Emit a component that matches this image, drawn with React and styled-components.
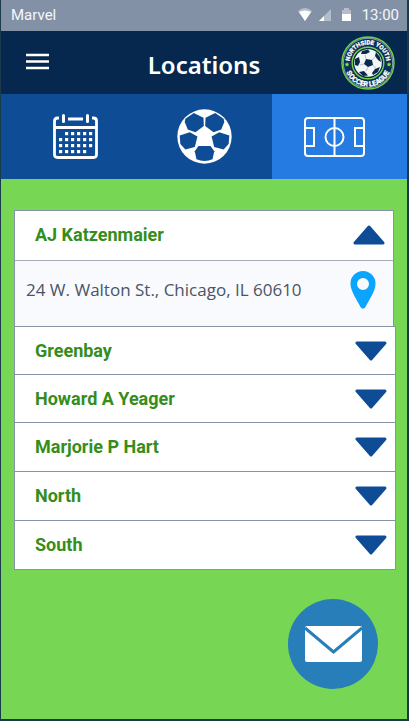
import React, { useState } from 'react';
import styled, { createGlobalStyle } from 'styled-components';

const GlobalStyle = createGlobalStyle`
  *, *::before, *::after { box-sizing: border-box; }
  body { margin: 0; background: #142f47; }
  button, a { font: inherit; color: inherit; }
`;

const Screen = styled.div`
  display: flex;
  flex-direction: column;
  min-height: 100vh;
  border: solid #1b3a4b;
  border-width: 0 2px 2px 1px;
  background: #77d653;
  font-family: Roboto, sans-serif;
`;

const StatusBar = styled.div`
  display: flex;
  align-items: center;
  height: 31px;
  padding: 0 8px 2px 10px;
  background: #8391a7;
  color: #f4f7fb;
  font-size: 15px;
  line-height: 18px;
`;

const StatusIcons = styled.div`
  display: flex;
  align-items: center;
  gap: 7px;
  margin-left: auto;
  margin-right: 7px;
`;

const Header = styled.header`
  display: grid;
  grid-template-columns: 72px 1fr 72px;
  align-items: center;
  height: 63px;
  background: #06284e;
  color: #fff;
`;

const MenuButton = styled.button`
  display: flex;
  justify-self: center;
  padding: 0 0 2px;
  border: 0;
  background: none;
  cursor: pointer;
`;

const Title = styled.h1`
  margin: 0;
  padding-top: 4px;
  font: 600 24px/32px "Noto Sans", sans-serif;
  text-align: center;
`;

const Crest = styled.svg`
  display: block;
  width: 54px;
  height: 54px;
  justify-self: end;
  margin-right: 12px;
`;

const Tabs = styled.nav`
  display: grid;
  grid-template-columns: repeat(3, 1fr);
  height: 85px;
`;

const Tab = styled.button`
  display: flex;
  align-items: center;
  justify-content: center;
  padding: 0;
  border: 0;
  background: ${({ $active }) => ($active ? '#257be2' : '#0e4c95')};
  cursor: pointer;
  &:first-child { padding-left: 14px; }
  &:nth-child(2) { padding-left: 2px; }
  &:last-child { padding-right: 10px; }
`;

const Content = styled.main`
  display: flex;
  flex: 1;
  flex-direction: column;
  padding: 31px 11px 30px 13px;
`;

const ItemHeading = styled.h2`
  margin: 0;
  font: 700 18px/24px Roboto, sans-serif;
`;

const ItemButton = styled.button`
  display: flex;
  align-items: center;
  justify-content: space-between;
  width: 100%;
  height: ${({ $open }) => ($open ? 49 : 48)}px;
  padding: 0 8px ${({ $open }) => ($open ? 2 : 0)}px 20px;
  border: 0;
  background: none;
  color: #358d1c;
  text-align: left;
  cursor: pointer;
`;

const Item = styled.section`
  margin-right: ${({ $open }) => ($open ? 2 : 0)}px;
  border: solid #8793a8;
  border-width: 1px 1px 0 1px;
  background: #fff;
  &:last-child { border-bottom-width: 1px; }
  &:nth-child(2) ${ItemButton}, &:nth-child(3) ${ItemButton} { height: 47px; }
`;

const Address = styled.div`
  display: flex;
  align-items: center;
  justify-content: space-between;
  height: 66px;
  padding: 0 17px 7px 11px;
  border-top: 1px solid #a3aab8;
  background: #f8fafd;
  color: #4b5465;
  font: 400 17px/24px "Open Sans", sans-serif;
`;

const MapLink = styled.a`
  display: flex;
`;

const MailButton = styled.button`
  display: flex;
  align-items: center;
  justify-content: center;
  align-self: flex-end;
  width: 90px;
  height: 90px;
  margin: auto 18px 0 0;
  padding: 0;
  border: 0;
  border-radius: 50%;
  background: #277eb9;
  cursor: pointer;
`;

function Ball({ size, patch }) {
  return (
    <svg width={size} height={size} viewBox="38 45 164 164" aria-hidden="true">
      <circle cx="120" cy="127" r="81" fill="#fff" />
      <g fill={patch}>
        <path d="M63 74 88 57 117 71 118 96 93 114 70 106 61 84Z" />
        <path d="M177 74 152 57 123 71 122 96 147 114 170 106 179 84Z" />
        <path d="M46 124 76 114 99 127 91 158 63 166 48 149Z" />
        <path d="M194 124 164 114 141 127 149 158 177 166 192 149Z" />
        <path d="M102 155H138L149 171 144 195Q120 205 96 195L91 171Z" />
      </g>
    </svg>
  );
}

function LeagueCrest() {
  return (
    <Crest viewBox="0 0 54 54" role="img" aria-label="Northside Youth Soccer League">
      <defs>
        <path id="crest-top" d="M9.500 33A18.500 18.500 0 1 1 44.500 33" />
        <path id="crest-bottom" d="M3.500 27a23.500 23.500 0 0 0 47 0" />
      </defs>
      <circle cx="27" cy="27" r="26" fill="#0a3158" stroke="#70d448" strokeWidth="1.4" />
      <circle cx="27" cy="27" r="24.700" fill="none" stroke="#dceee9" strokeWidth=".6" />
      <circle cx="27" cy="27" r="15.800" fill="#0a2a4b" stroke="#70d448" strokeWidth="1.4" />
      <circle cx="27" cy="27" r="13.800" fill="#f3f6f7" />
      <g fill="#082a4b">
        <path d="M25 23 31 24 32 29 27 31 23 28Z" />
        <path d="M21 15 27 13.500 29 16 25 18 20 18Z" />
        <path d="M35 16 39 21 40 26 37 24 34 20Z" />
        <path d="M14 23 18 21 19 26 17 30 14 29Z" />
        <path d="M18 36 23 35 27 39.500 22 40Z" />
        <path d="M34 33 39 31 37 36 32 39 31 37Z" />
      </g>
      <g stroke="#9aabb8" strokeWidth=".7" fill="none">
        <path d="m25 23-1-4m7 5 3-3m-2 8 3 4m-8-2-2 4m-2-7-4 1" />
      </g>
      <g fill="#78e23e">
        <path d="m6 26 .7 1.600 1.800.1-1.400 1.200.5 1.700L6 29.700l-1.600.9.5-1.700-1.400-1.200 1.800-.1Z" />
        <path d="m48 26 .7 1.600 1.800.1-1.400 1.200.5 1.700-1.600-.9-1.600.9.5-1.700-1.400-1.200 1.800-.1Z" />
      </g>
      <g
        fill="#fff"
        stroke="#fff"
        strokeWidth=".3"
        fontFamily="Roboto, sans-serif"
        fontWeight="700"
        textAnchor="middle"
      >
        <text fontSize="6"><textPath href="#crest-top" startOffset="50%">NORTHSIDE YOUTH</textPath></text>
        <text fontSize="7"><textPath href="#crest-bottom" startOffset="50%">SOCCER LEAGUE</textPath></text>
      </g>
    </Crest>
  );
}

function CalendarIcon() {
  const dots = [];
  for (let row = 0; row < 4; row += 1) {
    for (let col = 0; col < 6; col += 1) {
      if ((row === 0 && col === 0) || (row === 3 && col === 5)) continue;
      dots.push(<rect key={`${row}-${col}`} x={6 + col * 6} y={18 + row * 6} width="3.2" height="3.2" />);
    }
  }
  return (
    <svg width="45" height="45" viewBox="0 0 45 45" fill="#fff" aria-hidden="true">
      <path d="M6 4H4.500Q1.500 4 1.500 7V40.500Q1.500 43.500 4.500 43.500H40.500Q43.500 43.500 43.500 40.500V7Q43.500 4 40.500 4H39M15 5H30M1.500 13.500H43.500" fill="none" stroke="#fff" strokeWidth="2.800" />
      <path d="M10.500 1.500V7.500M34.500 1.500V7.500" stroke="#fff" strokeWidth="3" strokeLinecap="round" />
      {dots}
    </svg>
  );
}

function FieldIcon() {
  return (
    <svg width="61" height="40" viewBox="0 0 61 40" fill="none" stroke="#fff" strokeWidth="2" aria-hidden="true">
      <rect x="1" y="1" width="59" height="38" rx="3" />
      <path d="M30.500 1V39M1 11H10V29H1M60 11H51V29H60" />
      <circle cx="30.500" cy="20" r="9" />
    </svg>
  );
}

function Arrow({ up }) {
  return (
    <svg width="32" height="20" viewBox="0 0 32 20" aria-hidden="true">
      <path
        d={up ? 'M2 18H30L16 2Z' : 'M2 2H30L16 18Z'}
        fill="#0e4c95"
        stroke="#0e4c95"
        strokeWidth="3"
        strokeLinejoin="round"
      />
    </svg>
  );
}

const locations = [
  { name: 'AJ Katzenmaier', address: '24 W. Walton St., Chicago, IL 60610' },
  { name: 'Greenbay' },
  { name: 'Howard A Yeager' },
  { name: 'Marjorie P Hart' },
  { name: 'North' },
  { name: 'South' },
];

export default function App() {
  const [openName, setOpenName] = useState('AJ Katzenmaier');
  return (
    <>
      <GlobalStyle />
      <Screen>
        <StatusBar>
          <span>Marvel</span>
          <StatusIcons>
            <svg width="14" height="13" viewBox="0 0 14 13" aria-hidden="true">
              <path d="M0 3Q7-3 14 3L7 13Z" fill="#b5bdca" />
              <path d="M1 4Q7 1 13 4L7 13Z" fill="#fff" />
            </svg>
            <svg width="12" height="12" viewBox="0 0 12 12" aria-hidden="true">
              <path d="M12 0V12H0Z" fill="#b5bdca" />
              <path d="M5 7V12H0Z" fill="#fff" />
            </svg>
            <svg width="17" height="13" viewBox="-4 0 17 13" aria-hidden="true">
              <path d="M0 2H2V0H7V2H9V13H0Z" fill="#b5bdca" />
              <path d="M0 6H9V13H0Z" fill="#fff" />
            </svg>
          </StatusIcons>
          <span>13:00</span>
        </StatusBar>
        <Header>
          <MenuButton aria-label="Menu">
            <svg width="23" height="17" viewBox="0 0 23 17" aria-hidden="true">
              <path d="M0 2H23M0 8.500H23M0 15H23" stroke="#fff" strokeWidth="2.400" />
            </svg>
          </MenuButton>
          <Title>Locations</Title>
          <LeagueCrest />
        </Header>
        <Tabs aria-label="Sections">
          <Tab aria-label="Schedule">
            <CalendarIcon />
          </Tab>
          <Tab aria-label="Games">
            <Ball size={55} patch="#0e4c95" />
          </Tab>
          <Tab $active aria-label="Locations" aria-current="page">
            <FieldIcon />
          </Tab>
        </Tabs>
        <Content>
          <div>
            {locations.map(({ name, address }) => {
              const open = name === openName;
              return (
                <Item key={name} $open={open}>
                  <ItemHeading>
                    <ItemButton $open={open} aria-expanded={open} onClick={() => setOpenName(open ? '' : name)}>
                      {name}
                      <Arrow up={open} />
                    </ItemButton>
                  </ItemHeading>
                  {open && address && (
                    <Address>
                      <span>{address}</span>
                      <MapLink href="#map" aria-label="Open map">
                        <svg width="26" height="38" viewBox="0 0 26 38" aria-hidden="true">
                          <path
                            fillRule="evenodd"
                            fill="#0ba5ff"
                            d="M13 0A12.500 12.500 0 0 0 .5 13C.5 20 7 29 10.500 36Q13 39.500 15.500 36C19 29 25.500 20 25.500 13A12.500 12.500 0 0 0 13 0ZM13 7A6 6 0 1 1 13 19A6 6 0 0 1 13 7Z"
                          />
                        </svg>
                      </MapLink>
                    </Address>
                  )}
                </Item>
              );
            })}
          </div>
          <MailButton aria-label="Send a message">
            <svg width="57" height="36" viewBox="0 0 57 36" aria-hidden="true">
              <rect width="57" height="36" rx="2" fill="#fff" />
              <path d="M0 2 28.500 26 57 2" fill="none" stroke="#277eb9" strokeWidth="3" />
            </svg>
          </MailButton>
        </Content>
      </Screen>
    </>
  );
}
